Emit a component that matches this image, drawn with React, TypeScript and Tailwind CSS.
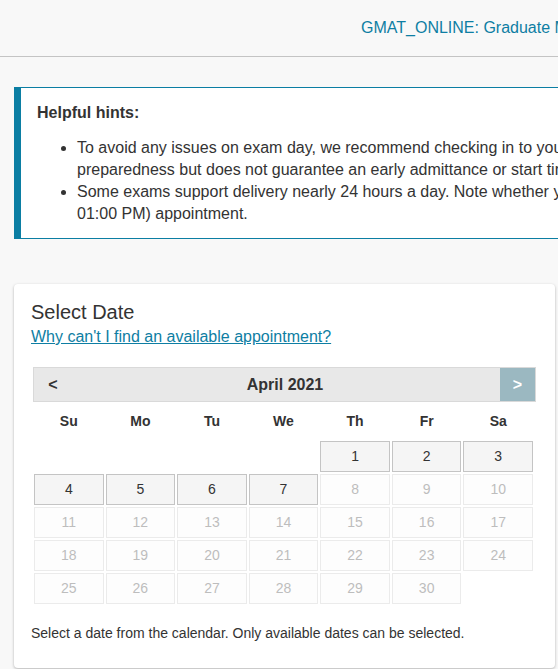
import React from "react";

const days = ["Su", "Mo", "Tu", "We", "Th", "Fr", "Sa"];
const available = [1, 2, 3, 4, 5, 6, 7];

export default function App() {
  const cells: (number | null)[] = [null, null, null, null];
  for (let d = 1; d <= 30; d++) cells.push(d);

  return (
    <div className="min-h-screen w-full overflow-hidden bg-[#f8f8f8] text-[#333] font-['Liberation_Sans',Arial,sans-serif]">
      {/* Header */}
      <div className="h-[57px] border-b border-[#c4c4c4] flex items-center pl-[361px] pb-[1px] whitespace-nowrap">
        <span className="text-[16px] text-[#0e7ea3]">GMAT_ONLINE: Graduate Management Admission Test</span>
      </div>

      {/* Hints */}
      <div className="mt-[30px] ml-[14px] w-[900px] bg-white border-l-[7px] border-t border-b border-[#0b7ea3] pl-[16px] pt-[14px] pb-[13px] whitespace-nowrap">
        <div className="text-[16px] leading-[22px] font-bold">Helpful hints:</div>
        <ul className="mt-[13px] list-disc pl-[40px] text-[16px] leading-[22px]">
          <li>
            To avoid any issues on exam day, we recommend checking in to your exam up to 30 minutes before your appointment time. This allows for
            <br />
            preparedness but does not guarantee an early admittance or start time.
          </li>
          <li>
            Some exams support delivery nearly 24 hours a day. Note whether you are scheduling an AM (for example, 01:00 AM) or PM (for example,
            <br />
            01:00 PM) appointment.
          </li>
        </ul>
      </div>

      {/* Calendar card */}
      <div className="mt-[45px] ml-[14px] w-[541px] bg-white rounded-[4px] shadow-[0_1px_3px_rgba(0,0,0,0.28)] px-[17px] pt-[16px] pb-[27px]">
        <div className="text-[20px] leading-[24px]">Select Date</div>
        <a href="#" className="block mt-[2px] text-[16px] leading-[22px] text-[#0e7ea3] underline">
          Why can't I find an available appointment?
        </a>

        <div className="mt-[19px] mx-[2px] h-[35px] flex items-stretch bg-[#e8e8e8] border border-[#d9d9d9]">
          <button className="w-[36px] text-[16px] font-bold text-[#333] pl-[2px]">&lt;</button>
          <div className="flex-1 flex items-center justify-center text-[16px] font-bold">April 2021</div>
          <button className="w-[35px] bg-[#9bb8c1] text-white text-[16px] font-bold">&gt;</button>
        </div>

        <div className="ml-[3px] w-[499px] grid grid-cols-7 gap-x-[2px]">
          {days.map((d) => (
            <div key={d} className="h-[39px] flex items-center justify-center text-[14px] font-bold">
              {d}
            </div>
          ))}
        </div>

        <div className="ml-[3px] w-[499px] grid grid-cols-7 gap-x-[2px] gap-y-[2px]">
          {cells.map((d, i) =>
            d === null ? (
              <div key={i} className="h-[31px]" />
            ) : available.includes(d) ? (
              <div
                key={i}
                className="h-[31px] flex items-center justify-center text-[14px] text-[#333] bg-[#f5f5f5] border border-[#c4c4c4]"
              >
                {d}
              </div>
            ) : (
              <div
                key={i}
                className="h-[31px] flex items-center justify-center text-[14px] text-[#bdbdbd] bg-[#fdfdfd] border border-[#ebebeb]"
              >
                {d}
              </div>
            )
          )}
        </div>

        <p className="mt-[21px] text-[14px] leading-[16px]">
          Select a date from the calendar. Only available dates can be selected.
        </p>
      </div>
    </div>
  );
}
